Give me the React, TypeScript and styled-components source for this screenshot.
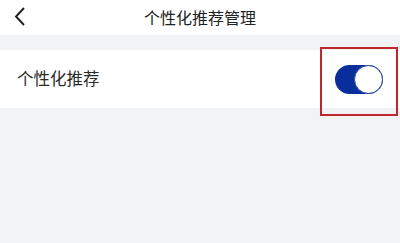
import React from "react";
import styled, { createGlobalStyle } from "styled-components";

const Global = createGlobalStyle`
  html, body { margin: 0; padding: 0; }
  body {
    width: 400px; height: 243px; overflow: hidden;
    background: #f2f3f5;
    font-family: "Noto Sans CJK SC", "Noto Sans", sans-serif;
  }
`;

const Page = styled.div`
  width: 400px;
  height: 243px;
  background: #f2f3f5;
  display: flex;
  flex-direction: column;
`;

const Header = styled.div`
  height: 35px;
  background: #ffffff;
  display: flex;
  align-items: center;
  justify-content: center;
  position: relative;
`;

const Back = styled.div`
  position: absolute;
  left: 14px;
  top: 7px;
  width: 14px;
  height: 19px;
  display: flex;
`;

const Title = styled.div`
  font-size: 16px;
  color: #222;
  line-height: 1;
  margin-top: -1px;
`;

const Gap = styled.div`
  height: 15px;
`;

const Row = styled.div`
  height: 58px;
  background: #ffffff;
  display: flex;
  align-items: center;
  justify-content: space-between;
  padding: 0 17px;
`;

const Label = styled.div`
  font-size: 16.5px;
  color: #2a2a2a;
  line-height: 1;
  margin-top: -2px;
`;

const Highlight = styled.div`
  position: absolute;
  left: 320px;
  top: 47px;
  width: 78px;
  height: 69px;
  border: 2px solid #c0272d;
  box-sizing: border-box;
`;

const Toggle = styled.div<{ on: boolean }>`
  width: 48px;
  height: 29px;
  border-radius: 15px;
  background: ${(p) => (p.on ? "#0a2d9c" : "#ddd")};
  position: relative;
  margin-top: 1px;
`;

const Knob = styled.div<{ on: boolean }>`
  position: absolute;
  top: 0;
  ${(p) => (p.on ? "right: 0;" : "left: 0;")}
  width: 29px;
  height: 29px;
  border-radius: 50%;
  background: #fff;
  border: 1.5px solid #2a47a8;
  box-sizing: border-box;
`;

export default function App() {
  return (
    <>
      <Global />
      <Page>
        <Header>
          <Back>
            <svg width="14" height="19" viewBox="0 0 14 19">
              <path d="M10 1 L2 9.5 L10 18" fill="none" stroke="#1e1e1e" strokeWidth="1.9" />
            </svg>
          </Back>
          <Title>个性化推荐管理</Title>
        </Header>
        <Gap />
        <Row>
          <Label>个性化推荐</Label>
          <Toggle on={true}>
            <Knob on={true} />
          </Toggle>
        </Row>
      </Page>
      <Highlight />
    </>
  );
}
